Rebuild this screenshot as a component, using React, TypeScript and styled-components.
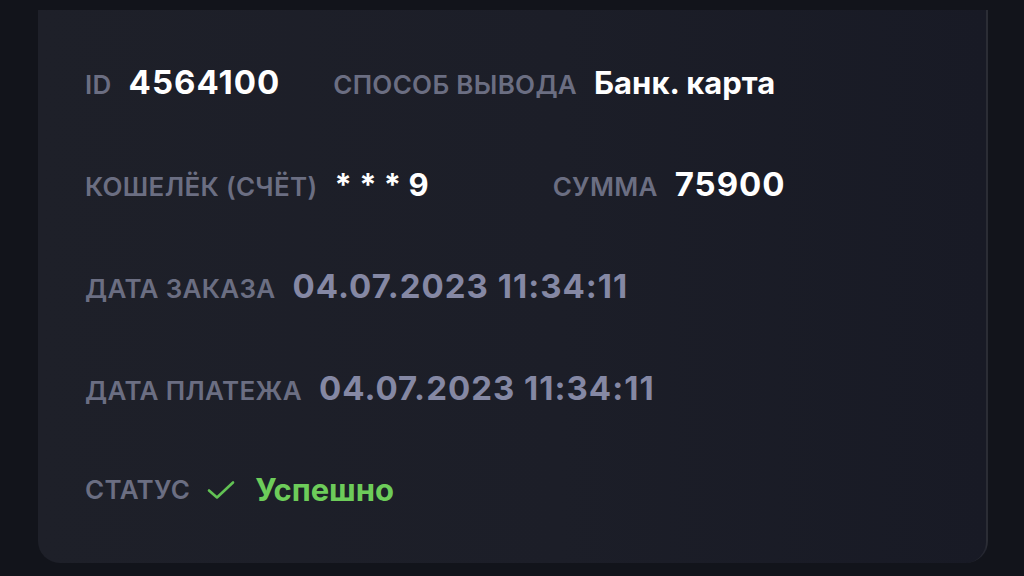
import styled, { createGlobalStyle } from 'styled-components';

const GlobalStyle = createGlobalStyle`
  html, body {
    margin: 0;
    padding: 0;
    background-color: #12141b;
    font-family: Inter, 'Noto Sans', sans-serif;
  }
`;

const Page = styled.main`
  min-height: 576px;
  box-sizing: border-box;
  padding: 10px 36px 13px 38px;
`;

const Card = styled.section`
  box-sizing: border-box;
  height: 553px;
  padding: 52px 47px;
  display: flex;
  flex-direction: column;
  gap: 62px;
  background: linear-gradient(90deg, #1e2029 0%, #1c1e28 55%, #181a25 100%);
  border-right: 2px solid rgba(255, 255, 255, 0.06);
  border-radius: 0 0 22px 22px;
`;

const Row = styled.div<{ $gap: number }>`
  display: flex;
  align-items: baseline;
  gap: ${(p) => p.$gap}px;
  height: 40px;
  line-height: 40px;
`;

const Field = styled.div`
  display: flex;
  align-items: baseline;
  gap: 17px;
`;

const Label = styled.span`
  font-size: 26px;
  font-weight: 600;
  text-transform: uppercase;
  letter-spacing: 0.3px;
  color: #6b6e82;
`;

const Value = styled.span<{ $tone?: 'white' | 'muted' | 'success'; $digits?: boolean }>`
  font-size: ${(p) => (p.$digits ? 33 : 31)}px;
  font-weight: 700;
  letter-spacing: ${(p) => (p.$digits ? 1 : 0)}px;
  color: ${(p) =>
    p.$tone === 'muted' ? '#8588a4' : p.$tone === 'success' ? '#6dcc5a' : '#ffffff'};
`;

const Status = styled.div`
  display: flex;
  align-items: center;
  gap: 20px;
  align-self: center;
`;

const CheckIcon = () => (
  <svg width="28" height="20" viewBox="0 0 28 20" fill="none">
    <path d="M2 10.5 L10 17.5 L26 2.5" stroke="#62c254" strokeWidth="2.6" strokeLinecap="round" strokeLinejoin="round" />
  </svg>
);

export default function App() {
  return (
    <>
      <GlobalStyle />
      <Page>
        <Card>
          <Row $gap={53}>
            <Field>
              <Label>ID</Label>
              <Value $digits>4564100</Value>
            </Field>
            <Field>
              <Label>Способ вывода</Label>
              <Value>Банк. карта</Value>
            </Field>
          </Row>
          <Row $gap={124}>
            <Field>
              <Label>Кошелёк (счёт)</Label>
              <Value>* * * 9</Value>
            </Field>
            <Field>
              <Label>Сумма</Label>
              <Value $digits>75900</Value>
            </Field>
          </Row>
          <Row $gap={0}>
            <Field>
              <Label>Дата заказа</Label>
              <Value $tone="muted" $digits>04.07.2023 11:34:11</Value>
            </Field>
          </Row>
          <Row $gap={0}>
            <Field>
              <Label>Дата платежа</Label>
              <Value $tone="muted" $digits>04.07.2023 11:34:11</Value>
            </Field>
          </Row>
          <Row $gap={0}>
            <Field>
              <Label>Статус</Label>
              <Status>
                <CheckIcon />
                <Value $tone="success">Успешно</Value>
              </Status>
            </Field>
          </Row>
        </Card>
      </Page>
    </>
  );
}
